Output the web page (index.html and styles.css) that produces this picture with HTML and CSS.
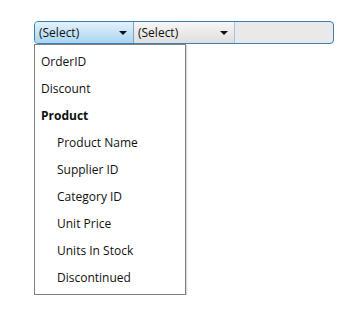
FILE: index.html
```html
<!DOCTYPE html>
<html lang="en">
<head>
  <meta charset="UTF-8" />
  <title>Field chooser</title>
  <link rel="stylesheet" href="styles.css">
</head>
<body>
  <div class="picker">
    <div class="bar">
      <div class="seg seg-active">
        <span>(Select)</span>
        <span class="arrow"></span>
      </div>
      <div class="seg">
        <span>(Select)</span>
        <span class="arrow"></span>
      </div>
      <div class="seg-rest"></div>
    </div>

    <!-- open dropdown of the first segment -->
    <div class="menu">
      <div class="item">OrderID</div>
      <div class="item">Discount</div>
      <div class="item group">Product</div>
      <div class="item sub">Product Name</div>
      <div class="item sub">Supplier ID</div>
      <div class="item sub">Category ID</div>
      <div class="item sub">Unit Price</div>
      <div class="item sub">Units In Stock</div>
      <div class="item sub">Discontinued</div>
    </div>
  </div>
</body>
</html>
```

FILE: styles.css
```css
body {
  margin: 0;
  padding: 21px 0 0 34px;
  background: #ffffff;
  font-family: 'Open Sans', sans-serif;
  font-size: 12px;
  color: #111;
}

.picker {
  width: 300px;
}

.bar {
  display: flex;
  height: 21px;
  border: 1px solid #3b7fb5;
  border-radius: 4px;
  background: #e9e9e9;
  overflow: hidden;
}

.seg {
  display: flex;
  align-items: center;
  justify-content: space-between;
  width: 101px;
  padding: 0 6px 0 4px;
  box-sizing: border-box;
  border-right: 1px solid #a9c3d9;
  background: linear-gradient(#f6f6f6, #dedede);
}

.seg-active {
  width: 99px;
  background: linear-gradient(#e3f2fc, #a9d4f1);
  border-right-color: #7aa6c7;
}

.arrow {
  width: 0;
  height: 0;
  border-left: 4px solid transparent;
  border-right: 4px solid transparent;
  border-top: 4px solid #111;
}

.seg-rest {
  flex: 1;
}

.menu {
  width: 150px;
  padding: 3px 0;
  background: #fff;
  border: 1px solid #7d8287;
  box-shadow: 1px 1px 1px rgba(0, 0, 0, 0.15);
}

.item {
  height: 27px;
  line-height: 27px;
  padding-left: 6px;
}

.group {
  font-weight: bold;
}

.sub {
  padding-left: 22px;
}
```
